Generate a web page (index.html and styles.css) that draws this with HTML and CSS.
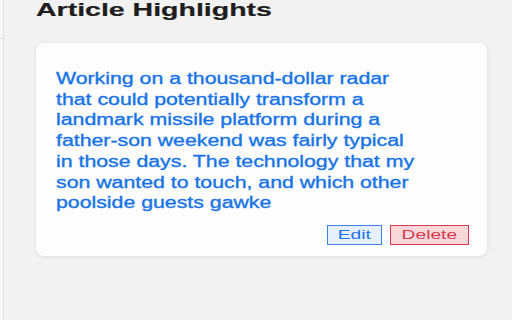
FILE: index.html
```html
<!DOCTYPE html>
<html>
<head>
<meta charset="utf-8">
<link rel="stylesheet" href="styles.css">
</head>
<body>
<div class="page">
  <div class="rail"><span class="tick"></span></div>
  <main class="main">
    <h1 class="title"><span class="wide-h">Article Highlights</span></h1>
    <section class="card">
      <p class="quote">Working on a thousand-dollar radar that could potentially transform a landmark missile platform during a father-son weekend was fairly typical in those days. The technology that my son wanted to touch, and which other poolside guests gawke</p>
      <div class="actions">
        <button class="btn btn-edit"><span class="wide-b">Edit</span></button>
        <button class="btn btn-delete"><span class="wide-b">Delete</span></button>
      </div>
    </section>
  </main>
</div>
</body>
</html>
```

FILE: styles.css
```css
html, body {
  margin: 0;
  padding: 0;
  background: #f2f2f2;
  font-family: "Liberation Sans", Arial, sans-serif;
}

.page {
  display: flex;
  min-height: 320px;
}

.rail {
  position: relative;
  width: 3px;
  border-right: 1px solid #e2e2e2;
  background: #f7f7f7;
}

.tick {
  position: absolute;
  left: 0;
  top: 38px;
  width: 3px;
  height: 1px;
  background: #d8d8d8;
}

.main {
  padding-left: 32px;
  width: 451px;
}

.title {
  margin: -1px 0 0 0;
  font-size: 19px;
  line-height: 22px;
  font-weight: bold;
  color: #1e1e1e;
  -webkit-text-stroke: 0.2px #1e1e1e;
}

.wide-h {
  display: inline-block;
  transform: scaleX(1.5);
  transform-origin: left center;
}

.card {
  margin-top: 22px;
  background: #fdfdfd;
  border-radius: 8px;
  box-shadow: 0 1px 5px rgba(0, 0, 0, 0.09);
  padding: 26px 18px 11px 20px;
  height: 176px;
}

.quote {
  margin: 0;
  width: 274px;
  font-size: 16px;
  line-height: 20.7px;
  color: #1874e6;
  -webkit-text-stroke: 0.35px #1874e6;
  transform: scaleX(1.33);
  transform-origin: left top;
}

.actions {
  display: flex;
  justify-content: flex-end;
  gap: 8px;
  margin-top: 11px;
}

.btn {
  height: 20px;
  padding: 0;
  font-family: "Liberation Sans", Arial, sans-serif;
  font-size: 12px;
  line-height: 16px;
  border-radius: 0;
  display: flex;
  align-items: center;
  justify-content: center;
}

.wide-b {
  display: inline-block;
  transform: scaleX(1.6);
  transform-origin: center center;
}

.btn-edit {
  width: 55px;
  background: #e6effb;
  border: 1px solid #3a83e6;
  color: #1a73e8;
}

.btn-delete {
  width: 79px;
  background: #f8d7db;
  border: 1px solid #d23a4e;
  color: #d23a4e;
}
```
